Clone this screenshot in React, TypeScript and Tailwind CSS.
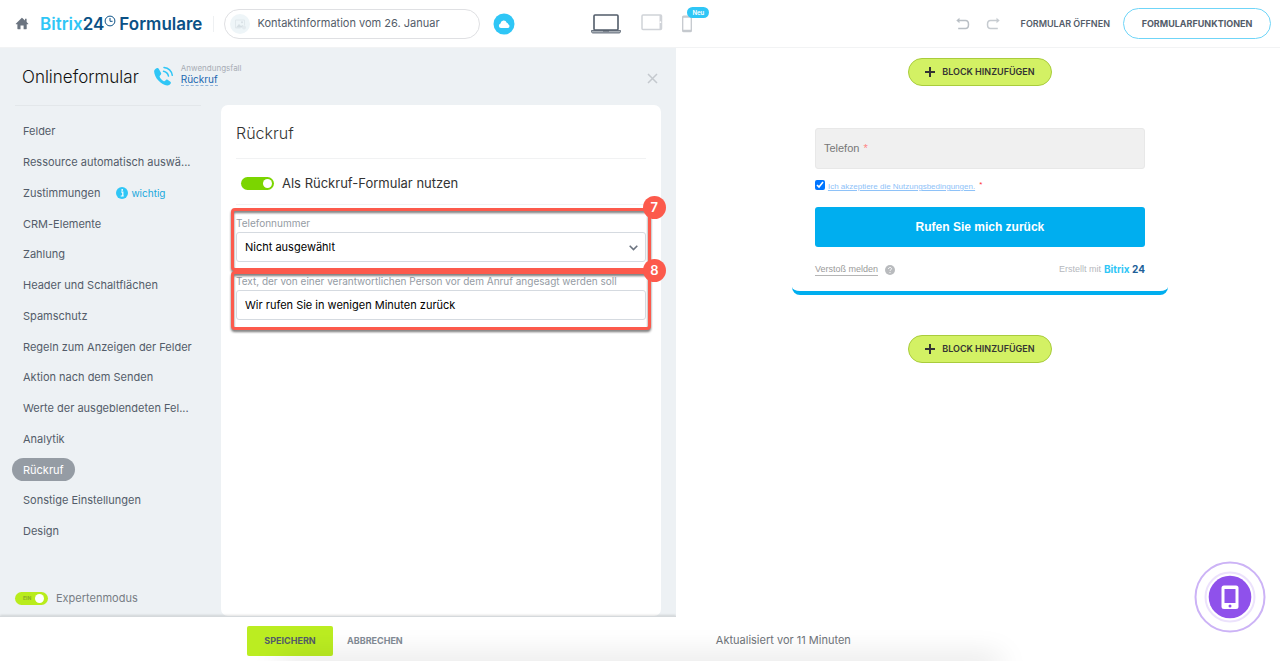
import { useState } from "react";

const navItems = [
  "Felder",
  "Ressource automatisch auswä...",
  "Zustimmungen",
  "CRM-Elemente",
  "Zahlung",
  "Header und Schaltflächen",
  "Spamschutz",
  "Regeln zum Anzeigen der Felder",
  "Aktion nach dem Senden",
  "Werte der ausgeblendeten Fel...",
  "Analytik",
  "Rückruf",
  "Sonstige Einstellungen",
  "Design",
];

function HomeIcon() {
  return (
    <svg width="14" height="13" viewBox="0 0 14 13" fill="#6b7480" aria-hidden="true">
      <path d="M7 .8 10 3.600V1.800h1.600v3.300L13.300 6.700c.2.2.1.5-.2.5h-1.400v4.600c0 .3-.2.500-.5.500H8.600V8.600H5.500v3.700H2.900c-.3 0-.5-.2-.5-.5V7.200H1c-.3 0-.4-.3-.2-.5L6.600.9c.1-.1.300-.1.400-.1Z" />
    </svg>
  );
}

function Logo() {
  return (
    <a href="#start" className="flex items-center text-[17px] leading-6 font-semibold">
      <span className="text-[#2fc6f6]">Bitrix</span>
      <span className="text-[#0b5186]">24</span>
      <svg width="12" height="12" viewBox="0 0 12 12" fill="none" stroke="#0b5186" className="mr-[3px] mb-[5px]" aria-hidden="true">
        <circle cx="6" cy="6" r="4.900" />
        <path d="M6 3v3.300h2.600" />
      </svg>
      <span className="text-[#0b5186]">Formulare</span>
    </a>
  );
}

function Header() {
  return (
    <header className="flex h-12 shrink-0 items-center border-b border-[#f2f3f4] bg-white pr-[9px] pl-[15px]">
      <a href="#home" aria-label="Startseite">
        <HomeIcon />
      </a>
      <div className="w-[11px]" />
      <Logo />
      <div className="ml-[11px] h-4 w-px bg-[#eef0f2]" />
      <div className="ml-[10px] flex h-[30px] w-64 items-center rounded-full border border-[#dfe0e3] px-[5px]">
        <svg width="20" height="20" viewBox="0 0 20 20" aria-hidden="true" className="shrink-0">
          <circle cx="10" cy="10" r="10" fill="#eef5f8" />
          <path d="M5.500 6h9v5.500M5.500 6v8h5" fill="none" stroke="#e0e8ec" />
          <path d="m6 13.500 3-3.500 2 2 1.500-1 1.500 2.500Z" fill="#d6dfe4" />
          <circle cx="12" cy="8.300" r="1" fill="#d6dfe4" />
          <circle cx="14" cy="13.500" r="2" fill="#e3eaee" />
        </svg>
        <input
          aria-label="Formularname"
          defaultValue="Kontaktinformation vom 26. Januar"
          className="ml-[7px] min-w-0 flex-1 bg-transparent text-[11px] text-[#535c69] outline-none"
        />
      </div>
      <button aria-label="Cloud" className="ml-[13px]">
        <svg width="22" height="22" viewBox="0 0 22 22" aria-hidden="true">
          <circle cx="11" cy="11" r="10.500" fill="#2fc6f6" />
          <path d="M8 15a2.300 2.300 0 0 1-.5-4.500 3.200 3.200 0 0 1 6.200-.8 1.700 1.700 0 0 1 1.500 1.500A2 2 0 0 1 15 15Z" fill="#fff" />
        </svg>
      </button>
      <div className="ml-[76px] flex items-center">
        <button aria-label="Desktop">
          <svg width="30" height="20" viewBox="0 0 30 20" aria-hidden="true">
            <rect x="3" y="1" width="24" height="15" rx="1" fill="#fff" stroke="#525c69" strokeWidth="1.600" />
            <path d="M.5 16.500h29v1.300c0 .7-.7 1.200-1.400 1.200H2c-.8 0-1.500-.5-1.500-1.200Z" fill="#a8afb6" stroke="#525c69" strokeWidth=".8" />
            <path d="M12 17h6" stroke="#525c69" />
          </svg>
        </button>
        <button aria-label="Tablet" className="mb-[2px] ml-5">
          <svg width="22" height="17" viewBox="0 0 22 17" aria-hidden="true">
            <rect x="1" y="1" width="19.500" height="14.500" rx="1" fill="#fff" stroke="#d0d3d8" strokeWidth="1.500" />
            <path d="M19.500 1v14" stroke="#d0d3d8" strokeWidth="2" />
            <circle cx="19.400" cy="8.200" r=".9" fill="#fff" />
          </svg>
        </button>
        <button aria-label="Smartphone" className="relative ml-[18px]">
          <svg width="12" height="18" viewBox="0 0 12 18" aria-hidden="true">
            <rect x="1.700" y="1.200" width="8.600" height="15.500" rx="1" fill="#fff" stroke="#c5c9ce" strokeWidth="1.300" />
            <path d="M1.500 2h9M1.500 15.500h9" stroke="#c5c9ce" strokeWidth="1.500" />
          </svg>
          <span className="absolute -top-2 left-[6px] flex h-[11px] items-center rounded-full bg-[#2fc6f6] px-[5px] text-[6px] font-semibold text-white">
            Neu
          </span>
        </button>
      </div>
      <div className="ml-auto flex items-center text-[9px] font-semibold text-[#535c69]">
        <button aria-label="Rückgängig">
          <svg width="14" height="13" viewBox="0 0 14 13" fill="none" stroke="#b9bfc5" strokeWidth="1.500" aria-hidden="true">
            <path d="M2 3.500h7.500c1.900 0 3 1.200 3 3.900 0 2.800-1.100 4-3 4H2.200" />
            <path d="M3.500.8.300 3.500l3.200 2.700Z" fill="#b9bfc5" stroke="none" />
          </svg>
        </button>
        <button aria-label="Wiederholen" className="ml-4">
          <svg width="14" height="13" viewBox="0 0 14 13" fill="none" stroke="#c6cbd0" strokeWidth="1.500" aria-hidden="true">
            <path d="M12 3.500H4.500c-1.900 0-3 1.200-3 3.900 0 2.800 1.100 4 3 4h7.300" />
            <path d="m10.500.8 3.200 2.700-3.200 2.700Z" fill="#c6cbd0" stroke="none" />
          </svg>
        </button>
        <a href="#open" className="ml-[21px]">
          FORMULAR ÖFFNEN
        </a>
        <button className="ml-[13px] flex h-[31px] w-[148px] items-center justify-center rounded-full border border-[#6fd5f8] font-bold">
          FORMULARFUNKTIONEN
        </button>
      </div>
    </header>
  );
}

function Sidebar() {
  const [active, setActive] = useState("Rückruf");
  return (
    <aside className="flex w-[221px] shrink-0 flex-col">
      <div className="mr-5 ml-[15px] h-px bg-[#e3e7ea]" />
      <nav className="mt-[14px] flex flex-1 flex-col items-start justify-between pl-3">
        {navItems.map((item) => (
          <a
            key={item}
            href="#section"
            onClick={() => setActive(item)}
            className={
              item === active
                ? "flex h-[23px] items-center rounded-full bg-[#959ca4] px-[11px] text-[11px] whitespace-nowrap text-white"
                : "flex h-[23px] items-center px-[11px] text-[11px] whitespace-nowrap text-[#535c69]"
            }
          >
            {item}
            {item === "Zustimmungen" && (
              <span className="ml-4 flex items-center gap-[3px] text-[10px] text-[#20a8dc]">
                <svg width="12" height="12" viewBox="0 0 12 12" aria-hidden="true">
                  <circle cx="6" cy="6" r="6" fill="#2fc6f6" />
                  <path d="M5 5h1.800v3.600M4.700 9h3" stroke="#fff" strokeWidth="1.200" fill="none" />
                  <circle cx="6.200" cy="2.900" r=".9" fill="#fff" />
                </svg>
                wichtig
              </span>
            )}
          </a>
        ))}
      </nav>
      <label className="mt-[49px] mb-[11px] ml-[15px] flex h-[13px] items-center gap-2 text-[11px] text-[#777d84]">
        <input type="checkbox" role="switch" defaultChecked className="peer sr-only" />
        <span className="flex h-[13px] w-[33px] items-center justify-between rounded-full bg-[#b9ec1c] pr-1 pl-2 text-[5px] font-bold text-[#89ad2a]">
          EIN
          <span className="size-[9px] rounded-full bg-white" />
        </span>
        Expertenmodus
      </label>
    </aside>
  );
}

function Mark({ n }: { n: number }) {
  return (
    <>
      <div className="pointer-events-none absolute -inset-x-[5px] inset-y-0 rounded-[4px] border-[3px] border-[#fc5a4c] drop-shadow-[0_2px_1px_rgba(60,60,60,0.7)]" />
      <span className="absolute -top-3 -right-5 z-10 flex size-[23px] items-center justify-center rounded-full bg-[#fc5a4c] text-[13px] font-semibold text-white">
        {n}
      </span>
    </>
  );
}

function Settings() {
  return (
    <section className="mr-[15px] min-w-0 flex-1 rounded-[7px] bg-white px-[15px]">
      <h2 className="flex h-[54px] items-center border-b border-[#f1f2f3] pt-[2px] text-[16px] font-light text-[#333]">Rückruf</h2>
      <label className="flex h-[45px] items-center gap-2 pt-1 pl-[5px] text-[13px] text-[#333]">
        <input type="checkbox" role="switch" defaultChecked className="sr-only" />
        <span className="flex h-[13px] w-[33px] items-center justify-end rounded-full bg-[#7bd500] pr-[2px]">
          <span className="size-[9px] rounded-full bg-white" />
        </span>
        Als Rückruf-Formular nutzen
      </label>
      <div className="border-t border-[#f1f2f3]">
        <div className="relative mt-[3px] h-[63px] pt-[8px]">
          <label htmlFor="phone" className="block text-[10px] leading-[14px] text-[#959ca4]">
            Telefonnummer
          </label>
          <div className="relative mt-[2px]">
            <select
              id="phone"
              className="block h-[30px] w-full appearance-none rounded-[3px] border border-[#d5dae0] bg-white px-2 text-[11px] text-black outline-none"
            >
              <option>Nicht ausgewählt</option>
            </select>
            <svg width="9" height="6" viewBox="0 0 9 6" className="pointer-events-none absolute top-[13px] right-2" fill="none" stroke="#6c7480" strokeWidth="1.600" aria-hidden="true">
              <path d="m.7.700 3.800 3.800L8.300.7" />
            </svg>
          </div>
          <Mark n={7} />
        </div>
        <div className="relative h-[59px] pt-[3px]">
          <label htmlFor="message" className="block overflow-visible text-[10px] leading-[14px] whitespace-nowrap text-[#959ca4]">
            Text, der von einer verantwortlichen Person vor dem Anruf angesagt werden soll
          </label>
          <input
            id="message"
            defaultValue="Wir rufen Sie in wenigen Minuten zurück"
            className="mt-[2px] block h-[30px] w-full rounded-[3px] border border-[#d5dae0] bg-white px-2 text-[11px] text-black outline-none"
          />
          <Mark n={8} />
        </div>
      </div>
    </section>
  );
}

function Editor() {
  return (
    <main className="flex w-[52.8%] shrink-0 flex-col bg-[#edf1f4]">
      <div className="flex h-[57px] shrink-0 items-center pt-[3px] pr-[18px] pl-[22px]">
        <h1 className="text-[17px] font-light text-[#111]">Onlineformular</h1>
        <svg width="21" height="21" viewBox="0 0 21 21" className="mb-1 ml-[14px]" aria-hidden="true">
          <path
            d="M3.600 2.200c-1.200.5-2.400 1.600-2.500 3 .1 3 1.700 6.600 4.300 9.300 2.700 2.700 6 4.800 8.700 5 1.600.1 2.700-.7 3.600-2 .4-.7.200-1.200-.3-1.700l-2.800-2c-.6-.4-1.100-.3-1.600.1l-1.300 1.200c-.4.300-.8.300-1.200 0-1.700-1-3-2.500-3.800-4.200-.2-.5-.1-.8.200-1.200l1-1.200c.4-.5.400-1 .2-1.500L5.700 2.800c-.4-.8-1.200-1-2.100-.6Z"
            fill="#2fc6f6"
          />
          <path d="M10.500 5.300c2.600.5 4.400 2.200 5 4.800M11 1.500c4.300.5 7.500 3.500 8.300 7.800" fill="none" stroke="#2fc6f6" strokeWidth="1.500" strokeLinecap="round" />
        </svg>
        <div className="mb-[7px] ml-[7px] flex flex-col items-start">
          <span className="text-[8px] leading-[11px] text-[#a8adb4]">Anwendungsfall</span>
          <a href="#case" className="border-b border-dashed border-[#8fb4dc] text-[10px] leading-[11px] text-[#2067b0]">
            Rückruf
          </a>
        </div>
        <button aria-label="Schließen" className="ml-auto">
          <svg width="11" height="11" viewBox="0 0 11 11" stroke="#c4c9ce" strokeWidth="1.500" aria-hidden="true">
            <path d="m1 1 9 9M10 1l-9 9" />
          </svg>
        </button>
      </div>
      <div className="flex flex-1">
        <Sidebar />
        <Settings />
      </div>
      <footer className="relative flex h-[45px] shrink-0 items-center gap-[14px] border-t border-[#d5d9dc] bg-white pt-1 pl-[247px] text-[9px] font-bold shadow-[0_-1px_2px_rgba(0,0,0,0.12)]">
        <button className="h-[30px] w-[86px] rounded-[2px] bg-[#bbed21] text-[#535c69]">SPEICHERN</button>
        <button className="text-[#828b95]">ABBRECHEN</button>
      </footer>
    </main>
  );
}

function AddBlock() {
  return (
    <button className="flex h-7 w-36 items-center justify-center gap-[7px] rounded-full border border-[#a9cc3c] bg-[#d3f164] text-[9px] font-semibold text-[#333]">
      <svg width="10" height="10" viewBox="0 0 10 10" stroke="#333" strokeWidth="2" aria-hidden="true">
        <path d="M5 0v10M0 5h10" />
      </svg>
      BLOCK HINZUFÜGEN
    </button>
  );
}

function Preview() {
  return (
    <section className="relative flex min-w-0 flex-1 flex-col items-center bg-white pt-[10px] pl-1">
      <AddBlock />
      <form className="mt-8 flex h-[177px] w-[376px] max-w-full flex-col rounded-[8px] border-b-4 border-[#00aeef] px-[23px] pt-[10px] font-['Liberation_Sans',Arial,sans-serif]">
        <label className="flex h-[41px] shrink-0 items-center rounded-[3px] border border-[#e8e8e8] bg-[#f0f0f0] px-2 text-[11px] text-[#777]">
          <span className="flex shrink-0 gap-1">
            Telefon <span className="text-[#ff8585]">*</span>
          </span>
          <input type="tel" className="min-w-0 flex-1 bg-transparent outline-none" />
        </label>
        <label className="mt-[10px] flex h-[12px] items-center text-[8px]">
          <input type="checkbox" defaultChecked className="mr-[3px] size-[10px] accent-[#0075ff]" />
          <a href="#terms" className="pt-1 text-[#8ec2f8] underline">
            Ich akzeptiere die Nutzungsbedingungen.
          </a>
          <span className="ml-1 text-[#f33]">*</span>
        </label>
        <button type="button" className="mt-4 h-[40px] shrink-0 rounded-[3px] bg-[#00aeef] text-[12px] font-bold text-white">
          Rufen Sie mich zurück
        </button>
        <div className="mt-[15px] flex items-center text-[9px]">
          <a href="#report" className="border-b border-[#b5b5b5] leading-[12px] text-[#9a9a9a]">
            Verstoß melden
          </a>
          <svg width="10" height="10" viewBox="0 0 10 10" className="ml-[7px]" aria-hidden="true">
            <circle cx="5" cy="5" r="5" fill="#b9bbbe" />
            <path d="M3.500 4c0-2 3-2 3-.2 0 1-1.500 1-1.500 2" stroke="#fff" fill="none" />
            <circle cx="5" cy="7.600" r=".6" fill="#fff" />
          </svg>
          <span className="ml-auto text-[#b5b8bd]">Erstellt mit</span>
          <span className="ml-[3px] font-[Inter,sans-serif] text-[10px] font-bold text-[#2fc6f6]">
            Bitrix <span className="text-[#215f98]">24</span>
          </span>
        </div>
      </form>
      <div className="h-10" />
      <AddBlock />
      <p className="mt-auto mb-[13px] self-start pl-9 text-[11px] leading-[15px] text-[#6f747a]">Aktualisiert vor 11 Minuten</p>
      <button aria-label="Mobile App" className="absolute right-[14px] bottom-7">
        <svg width="72" height="72" viewBox="0 0 72 72" aria-hidden="true">
          <circle cx="36" cy="36" r="34.500" fill="#fff" stroke="#ccb3f6" strokeWidth="2" />
          <circle cx="36" cy="36" r="24.500" fill="none" stroke="#ece2fc" strokeWidth="2" />
          <circle cx="36" cy="36" r="21.300" fill="#8f51eb" />
          <rect x="27.500" y="24.500" width="17" height="23.500" rx="2.500" fill="#fff" />
          <path d="M30.500 28h11v14h-11Z" fill="#8f51eb" />
          <circle cx="36" cy="45" r="1.500" fill="#8f51eb" />
        </svg>
      </button>
    </section>
  );
}

export default function App() {
  return (
    <div className="relative flex min-h-screen flex-col overflow-hidden bg-white font-[Inter,sans-serif]">
      <Header />
      <div className="flex flex-1">
        <Editor />
        <Preview />
      </div>
      <div className="pointer-events-none absolute -bottom-2 left-[22%] h-2 w-[56%] shadow-[0_0_30px_2px_rgba(0,0,0,0.18)]" />
    </div>
  );
}
